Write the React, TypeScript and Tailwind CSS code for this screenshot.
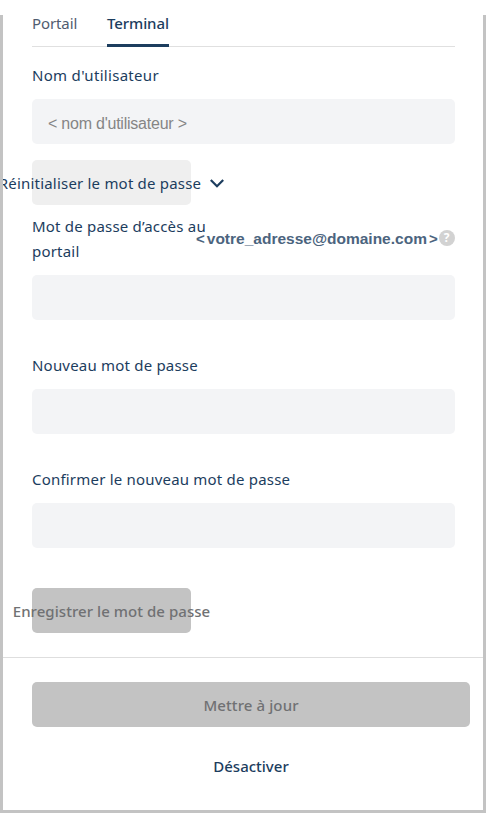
import clsx from 'clsx'

const tabs = [
  { id: 'portal', label: 'Portail', isActive: false, className: 'w-[45px]' },
  { id: 'terminal', label: 'Terminal', isActive: true, className: 'w-[62px]' },
]

const labelClass = 'font-normal leading-[25px] tracking-[0.2px]'

const fieldClass =
  'block w-full h-[45px] px-4 pt-1 rounded-[5px] bg-[#f3f4f6] outline-none font-["Liberation_Sans",Arial,sans-serif] font-normal text-[16px] tracking-[-0.23px] text-[#1c3d5e] placeholder:text-[#858585]'

const PasswordField: React.FC<{ id: string; label: string }> = ({
  id,
  label,
}) => {
  return (
    <div className="mt-[33px]">
      <label htmlFor={id} className={clsx('block h-9', labelClass)}>
        {label}
      </label>
      <input id={id} type="password" className={fieldClass} />
    </div>
  )
}

const App: React.FC = () => {
  return (
    <main className='h-[813px] w-[486px] overflow-hidden bg-white pt-[15px] font-["Noto_Sans","Segoe_UI",sans-serif] text-[15px] font-medium text-[#1c3d5e]'>
      <div className="flex h-full flex-col overflow-hidden border-x-[3px] border-b-[3px] border-[#c3c3c3]">
        <section className="h-[642px] pr-7 pl-[29px]">
          <nav className="flex h-8 gap-[30px] border-b border-[#e0e0e0]">
            {tabs.map((tab) => (
              <button
                key={tab.id}
                type="button"
                aria-current={tab.isActive ? 'page' : undefined}
                className={clsx(
                  'flex h-8 items-start leading-4 whitespace-nowrap',
                  tab.className,
                  tab.isActive
                    ? 'border-b-[3px] border-[#1c3d5e] font-medium tracking-[-0.1px]'
                    : 'font-normal tracking-[-0.1px] text-[#505c70]',
                )}
              >
                {tab.label}
              </button>
            ))}
          </nav>

          <label
            htmlFor="username"
            className="mt-4 block h-9 leading-[25px] font-normal tracking-[0.3px]"
          >
            Nom d'utilisateur
          </label>
          <input
            id="username"
            type="text"
            placeholder="< nom d'utilisateur >"
            className={fieldClass}
          />

          <button
            type="button"
            className="mt-4 flex h-[45px] w-[159px] items-center justify-center rounded-[5px] bg-[#efefef] pt-0.5 whitespace-nowrap"
          >
            <span className="shrink-0 font-normal tracking-[0.2px]">
              Réinitialiser le mot de passe
            </span>
            <svg
              viewBox="0 0 14 9"
              className="ml-[9px] h-[9px] w-[14px] shrink-0"
              fill="none"
              stroke="currentColor"
              strokeWidth="2.2"
            >
              <path d="M0.8 1 L7 7.2 L13.2 1" />
            </svg>
          </button>

          <div className="mt-[9px] flex h-[61px] items-start">
            <label
              htmlFor="portal-password"
              className={clsx('w-[180px]', labelClass)}
            >
              Mot de passe d’accès au portail
            </label>
            <div className="mt-[14px] -ml-4 flex shrink-0 items-center">
              <span className='flex gap-[2px] pt-[3px] font-["Liberation_Sans",Arial,sans-serif] leading-4 font-bold text-[#4b647e]'>
                <span>&lt;</span>
                <span className="text-[15.5px]">votre_adresse@domaine.com</span>
                <span>&gt;</span>
              </span>
              <span className="ml-px flex size-4 items-center justify-center rounded-full bg-[#d2d2d2] text-[12px] font-bold text-white">
                ?
              </span>
            </div>
          </div>
          <input id="portal-password" type="password" className={fieldClass} />

          <PasswordField id="new-password" label="Nouveau mot de passe" />
          <PasswordField
            id="confirm-password"
            label="Confirmer le nouveau mot de passe"
          />

          <button
            type="button"
            disabled
            className="mt-10 flex h-[45px] w-[159px] items-center justify-center rounded-[5px] bg-[#c3c3c3] pt-0.5 tracking-[0.05px] whitespace-nowrap text-[#707173]"
          >
            <span className="shrink-0">Enregistrer le mot de passe</span>
          </button>
        </section>

        <footer className="border-t border-[#dedede] pt-6 pr-[13px] pl-[29px]">
          <button
            type="button"
            disabled
            className="block h-[45px] w-full rounded-[5px] bg-[#c3c3c3] pt-0.5 tracking-[0.1px] text-[#707173]"
          >
            Mettre à jour
          </button>
          <button type="button" className="mt-[17px] block h-[45px] w-full">
            Désactiver
          </button>
        </footer>
      </div>
    </main>
  )
}

export default App
